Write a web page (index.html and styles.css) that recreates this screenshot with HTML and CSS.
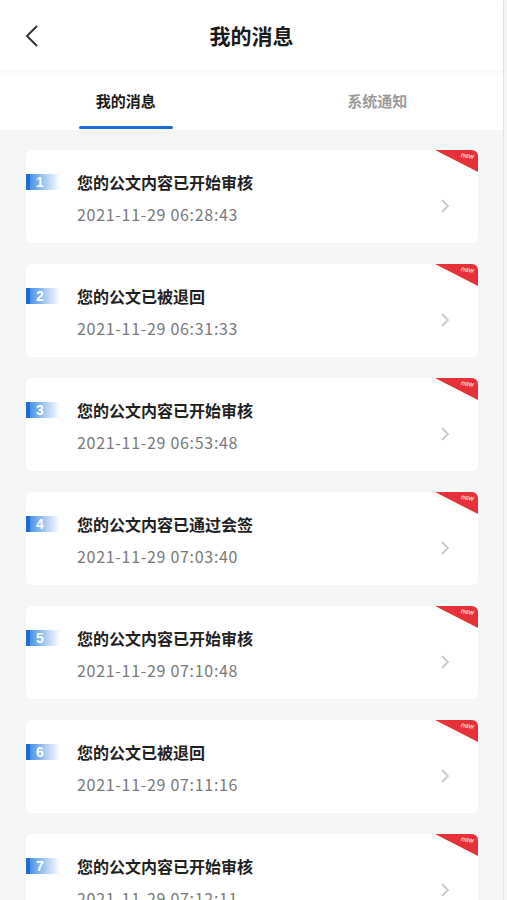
FILE: index.html
```html
<!DOCTYPE html>
<html lang="zh-CN">
<head>
  <meta charset="UTF-8">
  <title>我的消息</title>
  <link rel="stylesheet" href="styles.css">
</head>
<body>

  <div class="app">
    <div class="header">
      <span class="back">
        <svg width="14" height="22" viewBox="0 0 14 22"><polyline points="12,1 2,11 12,21" fill="none" stroke="#333" stroke-width="2"/></svg>
      </span>
      <h1>我的消息</h1>
    </div>

    <div class="tabs">
      <div class="tab active">我的消息</div>
      <div class="tab">系统通知</div>
    </div>

    <div class="list">
      <div class="card">
        <div class="corner"><span>new</span></div>
        <div class="num">1</div>
        <div class="text">
          <div class="title">您的公文内容已开始审核</div>
          <div class="date">2021-11-29 06:28:43</div>
        </div>
        <div class="arrow"><svg width="9" height="14" viewBox="0 0 9 14"><polyline points="1,1 7,7 1,13" fill="none" stroke="#c9c9c9" stroke-width="1.8"/></svg></div>
      </div>

      <div class="card">
        <div class="corner"><span>new</span></div>
        <div class="num">2</div>
        <div class="text">
          <div class="title">您的公文已被退回</div>
          <div class="date">2021-11-29 06:31:33</div>
        </div>
        <div class="arrow"><svg width="9" height="14" viewBox="0 0 9 14"><polyline points="1,1 7,7 1,13" fill="none" stroke="#c9c9c9" stroke-width="1.8"/></svg></div>
      </div>

      <div class="card">
        <div class="corner"><span>new</span></div>
        <div class="num">3</div>
        <div class="text">
          <div class="title">您的公文内容已开始审核</div>
          <div class="date">2021-11-29 06:53:48</div>
        </div>
        <div class="arrow"><svg width="9" height="14" viewBox="0 0 9 14"><polyline points="1,1 7,7 1,13" fill="none" stroke="#c9c9c9" stroke-width="1.8"/></svg></div>
      </div>

      <div class="card">
        <div class="corner"><span>new</span></div>
        <div class="num">4</div>
        <div class="text">
          <div class="title">您的公文内容已通过会签</div>
          <div class="date">2021-11-29 07:03:40</div>
        </div>
        <div class="arrow"><svg width="9" height="14" viewBox="0 0 9 14"><polyline points="1,1 7,7 1,13" fill="none" stroke="#c9c9c9" stroke-width="1.8"/></svg></div>
      </div>

      <div class="card">
        <div class="corner"><span>new</span></div>
        <div class="num">5</div>
        <div class="text">
          <div class="title">您的公文内容已开始审核</div>
          <div class="date">2021-11-29 07:10:48</div>
        </div>
        <div class="arrow"><svg width="9" height="14" viewBox="0 0 9 14"><polyline points="1,1 7,7 1,13" fill="none" stroke="#c9c9c9" stroke-width="1.8"/></svg></div>
      </div>

      <div class="card">
        <div class="corner"><span>new</span></div>
        <div class="num">6</div>
        <div class="text">
          <div class="title">您的公文已被退回</div>
          <div class="date">2021-11-29 07:11:16</div>
        </div>
        <div class="arrow"><svg width="9" height="14" viewBox="0 0 9 14"><polyline points="1,1 7,7 1,13" fill="none" stroke="#c9c9c9" stroke-width="1.8"/></svg></div>
      </div>

      <div class="card">
        <div class="corner"><span>new</span></div>
        <div class="num">7</div>
        <div class="text">
          <div class="title">您的公文内容已开始审核</div>
          <div class="date">2021-11-29 07:12:11</div>
        </div>
        <div class="arrow"><svg width="9" height="14" viewBox="0 0 9 14"><polyline points="1,1 7,7 1,13" fill="none" stroke="#c9c9c9" stroke-width="1.8"/></svg></div>
      </div>
    </div>
  </div>

</body>
</html>
```

FILE: styles.css
```css
body {
  margin: 0;
  background-color: #f5f6f8;
  font-family: "Noto Sans CJK SC", "Noto Sans", sans-serif;
  color: #222;
  overflow: hidden;
}

.app {
  width: 503px;
  min-height: 900px;
  background-color: #f5f6f8;
  border-right: 1px solid #e2e3e5;
}

.header {
  height: 70px;
  background-color: white;
  display: flex;
  align-items: center;
  justify-content: center;
  position: relative;
  box-shadow: 0 2px 6px rgba(0, 0, 0, 0.05);
  z-index: 1;
}

.header h1 {
  margin: 0;
  font-size: 21px;
  font-weight: bold;
  color: #1a1a1a;
}

.back {
  position: absolute;
  left: 25px;
  top: 25px;
  display: flex;
}

.tabs {
  height: 60px;
  background-color: white;
  display: flex;
}

.tab {
  flex: 1;
  display: flex;
  justify-content: center;
  align-items: center;
  font-size: 15px;
  font-weight: bold;
  color: #9a9a9a;
  position: relative;
}

.tab.active {
  color: #1a1a1a;
}

.tab.active::after {
  content: "";
  position: absolute;
  bottom: 1px;
  left: 50%;
  width: 94px;
  margin-left: -47px;
  height: 3px;
  border-radius: 2px;
  background-color: #1a6fd8;
}

.list {
  padding: 20px 25px 0 26px;
  display: flex;
  flex-direction: column;
  gap: 21px;
}

.card {
  background-color: white;
  border-radius: 6px;
  height: 93px;
  box-sizing: border-box;
  padding-top: 21px;
  display: grid;
  grid-template-columns: 51px 1fr auto;
  position: relative;
  overflow: hidden;
}

.corner {
  position: absolute;
  top: 0;
  right: 0;
  width: 43px;
  height: 22px;
  background-color: #e6313b;
  clip-path: polygon(0 0, 100% 0, 100% 100%);
}

.corner span {
  position: absolute;
  top: 2px;
  right: 4px;
  font-family: "Liberation Sans", sans-serif;
  font-size: 7px;
  font-style: italic;
  color: white;
  transform: rotate(6deg);
}

.num {
  align-self: start;
  margin-top: 3px;
  width: 34px;
  height: 16px;
  border-left: 4px solid #1c6cd6;
  background: linear-gradient(to right, #4b92e6, #c3dbf6 65%, rgba(255, 255, 255, 0));
  color: white;
  font-family: "Liberation Sans", sans-serif;
  font-size: 14px;
  font-weight: bold;
  line-height: 16px;
  padding-left: 6px;
  box-sizing: border-box;
}

.title {
  font-size: 16px;
  font-weight: bold;
  line-height: 22px;
  color: #1f1f1f;
}

.date {
  margin-top: 10px;
  font-size: 16px;
  line-height: 22px;
  color: #7a7a7a;
  letter-spacing: 0.7px;
}

.arrow {
  align-self: start;
  margin-top: 23px;
  margin-right: 28px;
}
```
